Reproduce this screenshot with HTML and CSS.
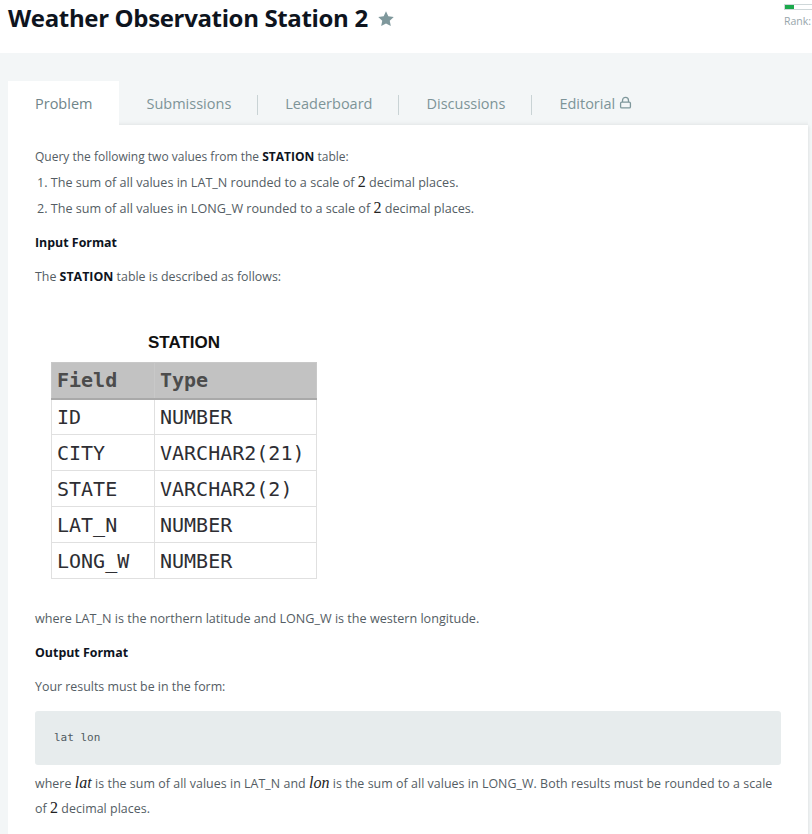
FILE: index.html
```html
<!DOCTYPE html>
<html>
<head>
<meta charset="utf-8">
<link rel="stylesheet" href="styles.css">
</head>
<body>
<header class="top">
  <h1 class="title">Weather Observation Station 2
    <svg class="star" viewBox="0 0 24 24" width="18" height="18"><path d="M12 1.8l3.1 6.6 7.2.9-5.3 5 1.4 7.1L12 17.9l-6.4 3.5 1.4-7.1-5.3-5 7.2-.9z" fill="#7f989c"/></svg>
  </h1>
  <div class="rank">
    <div class="rank-bar"><span class="rank-fill"></span></div>
    <span class="rank-label">Rank:</span>
  </div>
</header>
<div class="band">
  <nav class="tabs">
    <a class="tab active">Problem</a>
    <a class="tab sep">Submissions</a>
    <a class="tab sep">Leaderboard</a>
    <a class="tab sep">Discussions</a>
    <a class="tab">Editorial
      <svg class="lock" viewBox="0 0 14 14" width="13" height="13"><path d="M3.8 6.5V4.6a3.2 3.2 0 0 1 6.4 0v1.9" fill="none" stroke="#7e979b" stroke-width="1.4"/><rect x="1.7" y="6.5" width="10.6" height="6.3" rx="1.3" fill="none" stroke="#7e979b" stroke-width="1.4"/></svg>
    </a>
  </nav>
  <main class="panel">
    <p class="intro">Query the following two values from the <strong>STATION</strong> table:</p>
    <ol class="list">
      <li>The sum of all values in LAT_N rounded to a scale of <span class="math">2</span> decimal places.</li>
      <li>The sum of all values in LONG_W rounded to a scale of <span class="math">2</span> decimal places.</li>
    </ol>
    <p class="heading">Input Format</p>
    <p>The <strong>STATION</strong> table is described as follows:</p>
    <figure class="figure">
      <div class="caption">STATION</div>
      <table class="station">
        <thead><tr><th>Field</th><th>Type</th></tr></thead>
        <tbody>
          <tr><td>ID</td><td>NUMBER</td></tr>
          <tr><td>CITY</td><td>VARCHAR2(21)</td></tr>
          <tr><td>STATE</td><td>VARCHAR2(2)</td></tr>
          <tr><td>LAT_N</td><td>NUMBER</td></tr>
          <tr><td>LONG_W</td><td>NUMBER</td></tr>
        </tbody>
      </table>
    </figure>
    <p class="wide">where LAT_N is the northern latitude and LONG_W is the western longitude.</p>
    <p class="heading">Output Format</p>
    <p>Your results must be in the form:</p>
    <pre class="code">lat lon</pre>
    <p class="narrow">where <span class="mi">lat</span> is the sum of all values in LAT_N and <span class="mi">lon</span> is the sum of all values in LONG_W. Both results must be rounded to a scale of <span class="math">2</span> decimal places.</p>
  </main>
</div>
</body>
</html>
```

FILE: styles.css
```css
* { box-sizing: border-box; }
html, body { margin: 0; padding: 0; background: #fff; }
body { font-family: "Open Sans", "DejaVu Sans", sans-serif; color: #545d64; }

.top {
  height: 53px;
  display: flex;
  justify-content: space-between;
  align-items: flex-start;
  padding-left: 8px;
  background: #fff;
}
.title {
  margin: 0;
  padding-top: 1px;
  font-size: 24px;
  line-height: 34px;
  font-weight: 700;
  color: #0e141e;
  display: flex;
  align-items: center;
  gap: 9px;
  letter-spacing: -0.35px;
}
.star { display: block; margin-top: 1px; }

.rank {
  width: 28px;
  padding-top: 4px;
  display: flex;
  flex-direction: column;
  gap: 5px;
}
.rank-bar {
  width: 40px;
  height: 6px;
  border: 1px solid #cfd7d9;
  border-right: none;
  background: #fff;
}
.rank-fill { display: block; width: 9px; height: 4px; background: #1ba94c; }
.rank-label { font-size: 10.5px; color: #98a6ab; line-height: 12px; white-space: nowrap; }

.band {
  background: #f3f6f7;
  padding: 28px 4px 0 8px;
}
.tabs {
  display: flex;
  align-items: stretch;
  height: 44px;
  box-shadow: inset 0 -5px 5px -4px rgba(0,0,0,0.06);
}
.tab {
  display: flex;
  align-items: center;
  gap: 4px;
  padding: 1px 27px 0;
  font-size: 14.5px;
  color: #7d9498;
  position: relative;
  white-space: nowrap;
}
.tab.active { background: #fff; color: #70858a; }
.tab.sep::after {
  content: "";
  position: absolute;
  right: 0;
  top: 14px;
  height: 20px;
  border-right: 1px solid #c9d3d5;
}
.lock { display: block; margin-top: -2px; }

.panel {
  background: #fff;
  padding: 19px 27px 40px 27px;
  box-shadow: 2px 0 3px -1px rgba(0,0,0,0.08);
  font-size: 12.4px;
  line-height: 25px;
}
.panel p { margin: 0 0 9px; }
.panel p.intro { margin: 0; font-size: 12px; }
.panel p.wide { font-size: 12.6px; }
.panel strong { font-weight: 700; color: #0e141e; }
.heading { font-weight: 700; color: #0e141e; }
.list { margin: 0 0 9px; list-style-position: inside; padding-left: 2px; font-size: 12.6px; }
.list li { line-height: 25px; }
.math { font-family: "Liberation Serif", "DejaVu Serif", serif; font-size: 16px; color: #222; }
.mi { font-family: "Liberation Serif", "DejaVu Serif", serif; font-style: italic; font-size: 16px; color: #222; }

.figure { margin: 43px 0 27px 16px; width: 266px; }
.caption {
  font-family: "Liberation Sans", Arial, sans-serif;
  font-weight: 700;
  font-size: 17px;
  color: #111;
  text-align: center;
  line-height: 22px;
  margin-bottom: 8px;
}
.station {
  border-collapse: collapse;
  width: 266px;
  font-family: "DejaVu Sans Mono", monospace;
  font-size: 20px;
  color: #2e2e33;
}
.station th, .station td {
  height: 36px;
  padding: 0 0 0 5px;
  text-align: left;
  border: 1px solid #e0e0e0;
  line-height: 22px;
}
.station th { background: #c2c2c2; color: #4c4c4c; font-weight: 700; border-bottom: 2px solid #a9a9a9; border-color: #c8c8c8 #c8c8c8 #a9a9a9 #c8c8c8; }
.station th:first-child, .station td:first-child { width: 103px; }

.code {
  margin: 12px 0 6px;
  background: #e7eced;
  border-radius: 3px;
  height: 54px;
  padding: 14px 19px;
  font-family: "DejaVu Sans Mono", monospace;
  font-size: 11px;
  line-height: 26px;
  color: #505a61;
}
.panel p.narrow { font-size: 12.4px; letter-spacing: 0.05px; line-height: 24px; margin: 0; }
```
